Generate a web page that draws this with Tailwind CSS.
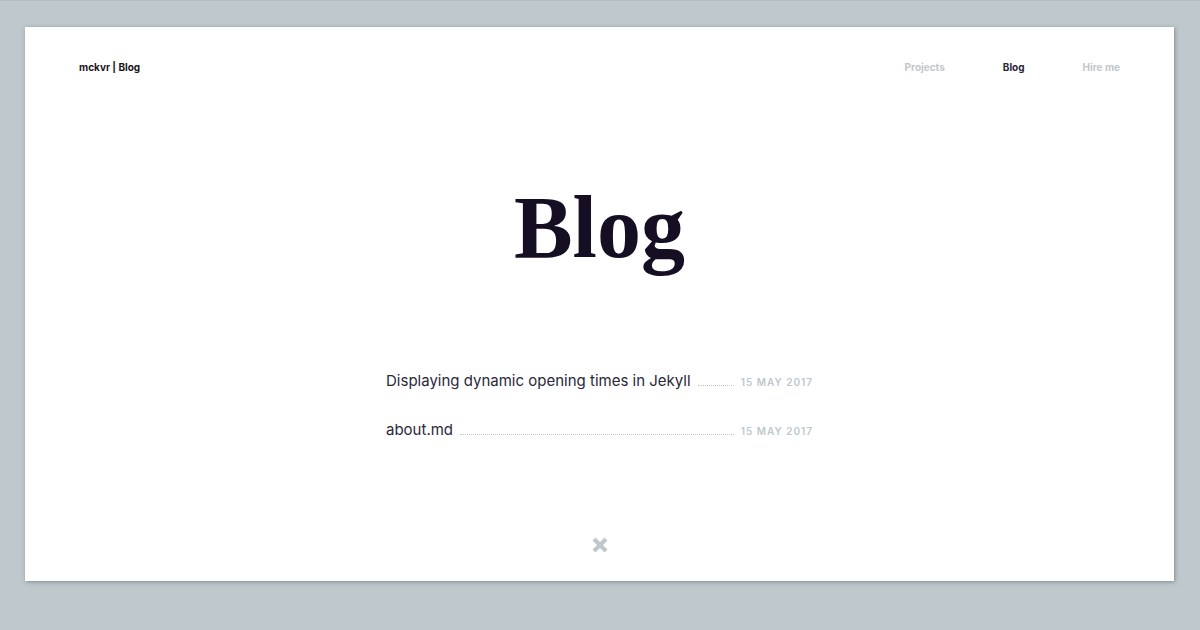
<!DOCTYPE html>
<html lang="en">
<head>
<meta charset="utf-8">
<meta name="viewport" content="width=device-width, initial-scale=1">
<title>mckvr | Blog</title>
<script src="https://cdn.jsdelivr.net/npm/@tailwindcss/browser@4"></script>
</head>
<body class="min-h-screen bg-[#bfc8cd] border-t border-[#b5bec3] pl-[25px] pr-[26px] pt-[26px] pb-[49px] flex flex-col font-['Inter',sans-serif] text-[#1a1523]">
<div class="grow flex flex-col bg-white shadow-[1px_1px_4px_rgba(60,75,85,0.5)]">
  <header class="flex items-center justify-between px-[54px] pt-8 text-[10px] leading-4 font-bold">
    <a href="#">mckvr | Blog</a>
    <nav class="flex gap-[58px] text-[#bfc8cd]">
      <a href="#">Projects</a>
      <a href="#" class="text-[#2a2838]">Blog</a>
      <a href="#">Hire me</a>
    </nav>
  </header>
  <main class="grow flex flex-col items-center">
    <h1 class="mt-[103px] font-['Liberation_Serif',serif] font-bold text-[88px] leading-[100px] text-[#160e22]">Blog</h1>
    <ul class="mt-[91px] w-full max-w-[427px] flex flex-col gap-[25px] text-[#2a2838]">
      <li class="flex items-baseline gap-[7px]">
        <a href="#" class="text-[15px] leading-6">Displaying dynamic opening times in Jekyll</a>
        <span class="grow border-b border-dotted border-[#bfc8cd]"></span>
        <time datetime="2017-05-15" class="text-[10px] font-semibold tracking-[1px] text-[#bfc8cd]">15 MAY 2017</time>
      </li>
      <li class="flex items-baseline gap-[7px]">
        <a href="#" class="text-[15px] leading-6">about.md</a>
        <span class="grow border-b border-dotted border-[#bfc8cd]"></span>
        <time datetime="2017-05-15" class="text-[10px] font-semibold tracking-[1px] text-[#bfc8cd]">15 MAY 2017</time>
      </li>
    </ul>
  </main>
  <footer class="flex justify-center pb-7">
    <a href="#" aria-label="Home"><svg class="block size-4" viewBox="0 0 16 16" fill="#bfc8cd"><path d="M3.500 .5 8 5 12.500 .5 15.500 3.500 11 8 15.500 12.500 12.500 15.500 8 11 3.500 15.500 .5 12.500 5 8 .5 3.500Z"/></svg></a>
  </footer>
</div>
</body>
</html>
